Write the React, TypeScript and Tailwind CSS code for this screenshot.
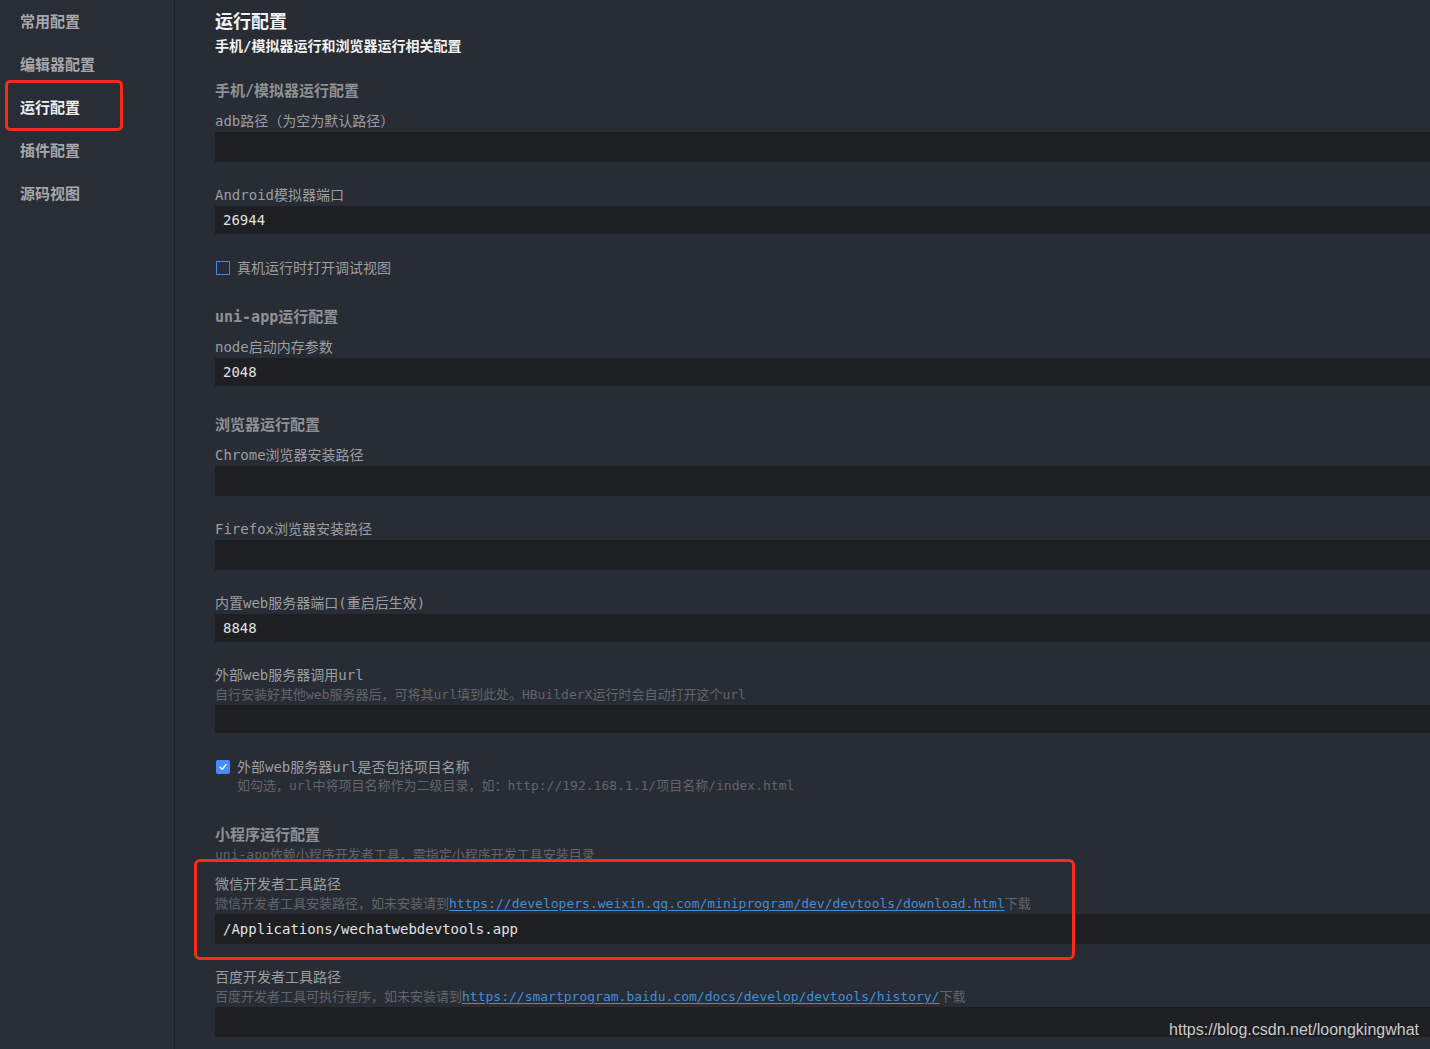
const mono = "font-['DejaVu_Sans_Mono','Noto_Sans_CJK_SC',monospace]";

const navItems = ["常用配置", "编辑器配置", "运行配置", "插件配置", "源码视图"];

function Heading({ children, mt }: { children: React.ReactNode; mt: string }) {
  return (
    <div className={`${mt} h-[22px] leading-[22px] text-[15px] font-bold text-[#8f9195]`}>{children}</div>
  );
}

function Label({ children, mt }: { children: React.ReactNode; mt: string }) {
  return <div className={`${mt} h-[20px] leading-[20px] text-[14px] text-[#9c9ea2]`}>{children}</div>;
}

function Desc({ children, mt = "mt-0" }: { children: React.ReactNode; mt?: string }) {
  return <div className={`${mt} h-[18px] leading-[18px] text-[13px] text-[#62656a] whitespace-nowrap`}>{children}</div>;
}

function Input({ value, h = "h-[30px]", mt = "mt-px" }: { value?: string; h?: string; mt?: string }) {
  return (
    <div className={`${mt} ${h} bg-[#1d1f23] pl-2 flex items-center text-[14px] text-[#e0e1e3]`}>
      {value}
    </div>
  );
}

function Checkbox({ checked, label, mt }: { checked?: boolean; label: string; mt: string }) {
  return (
    <div className={`${mt} h-[20px] flex items-center`}>
      {checked ? (
        <div className="ml-px w-[14px] h-[14px] rounded-[2px] bg-[#4a8af4] flex items-center justify-center">
          <svg width="10" height="10" viewBox="0 0 10 10" fill="none">
            <path d="M2 5.2 L4.2 7.2 L8 2.8" stroke="white" strokeWidth="1.4" strokeLinecap="round" strokeLinejoin="round" />
          </svg>
        </div>
      ) : (
        <div className="ml-px w-[14px] h-[14px] border-[1.5px] border-[#4a86e8]" />
      )}
      <span className="ml-[7px] text-[14px] text-[#9c9ea2]">{label}</span>
    </div>
  );
}

function Link({ href }: { href: string }) {
  return <span className="text-[#3f8fdc] underline underline-offset-2">{href}</span>;
}

export default function App() {
  return (
    <div className={`relative w-[1430px] h-[1049px] overflow-hidden bg-[#282c34] flex ${mono}`}>
      {/* sidebar */}
      <aside className="w-[175px] shrink-0 border-r border-[#1e2126] bg-[#292d35] font-['Noto_Sans_CJK_SC',sans-serif]">
        {navItems.map((item) => (
          <div
            key={item}
            className={`h-[43px] pl-5 flex items-center text-[15px] font-bold ${
              item === "运行配置" ? "text-[#eceef0]" : "text-[#a6a8ad]"
            }`}
          >
            {item}
          </div>
        ))}
      </aside>

      {/* content */}
      <main className="flex-1 pl-[40px] pt-[10px]">
        <div className="h-[24px] leading-[24px] text-[18px] font-bold text-[#f2f2f2]">运行配置</div>
        <div className="mt-[2px] h-[20px] leading-[20px] text-[14px] font-bold text-[#f2f2f2]">
          手机/模拟器运行和浏览器运行相关配置
        </div>

        <Heading mt="mt-[24px]">手机/模拟器运行配置</Heading>
        <Label mt="mt-[9px]">adb路径（为空为默认路径）</Label>
        <Input />
        <Label mt="mt-[23px]">Android模拟器端口</Label>
        <Input value="26944" h="h-[28px]" />
        <Checkbox mt="mt-[24px]" label="真机运行时打开调试视图" />

        <Heading mt="mt-[28px]">uni-app运行配置</Heading>
        <Label mt="mt-[9px]">node启动内存参数</Label>
        <Input value="2048" h="h-[28px]" />

        <Heading mt="mt-[28px]">浏览器运行配置</Heading>
        <Label mt="mt-[9px]">Chrome浏览器安装路径</Label>
        <Input />
        <Label mt="mt-[23px]">Firefox浏览器安装路径</Label>
        <Input />
        <Label mt="mt-[23px]">内置web服务器端口(重启后生效)</Label>
        <Input value="8848" h="h-[28px]" />
        <Label mt="mt-[23px]">外部web服务器调用url</Label>
        <Desc mt="mt-px">自行安装好其他web服务器后，可将其url填到此处。HBuilderX运行时会自动打开这个url</Desc>
        <Input h="h-[28px]" />
        <Checkbox mt="mt-[24px]" checked label="外部web服务器url是否包括项目名称" />
        <div className="pl-[22px]">
          <Desc>如勾选，url中将项目名称作为二级目录，如：http://192.168.1.1/项目名称/index.html</Desc>
        </div>

        <Heading mt="mt-[29px]">小程序运行配置</Heading>
        <Desc>uni-app依赖小程序开发者工具，需指定小程序开发工具安装目录</Desc>
        <Label mt="mt-[10px]">微信开发者工具路径</Label>
        <Desc mt="mt-px">
          微信开发者工具安装路径，如未安装请到
          <Link href="https://developers.weixin.qq.com/miniprogram/dev/devtools/download.html" />
          下载
        </Desc>
        <Input value="/Applications/wechatwebdevtools.app" h="h-[30px]" />
        <Label mt="mt-[23px]">百度开发者工具路径</Label>
        <Desc mt="mt-px">
          百度开发者工具可执行程序，如未安装请到
          <Link href="https://smartprogram.baidu.com/docs/develop/devtools/history/" />
          下载
        </Desc>
        <Input />
      </main>

      {/* annotation boxes */}
      <div className="absolute left-[5px] top-[80px] w-[118px] h-[51px] rounded-[5px] border-[3px] border-[#fb2a1c]" />
      <div className="absolute left-[194px] top-[859px] w-[881px] h-[101px] rounded-[6px] border-[3px] border-[#fb2a1c]" />

      {/* watermark */}
      <div className="absolute right-[11px] top-[1019px] text-[16px] leading-[22px] text-[#c9cacc] font-['Liberation_Sans',sans-serif]">
        https://blog.csdn.net/loongkingwhat
      </div>
    </div>
  );
}
